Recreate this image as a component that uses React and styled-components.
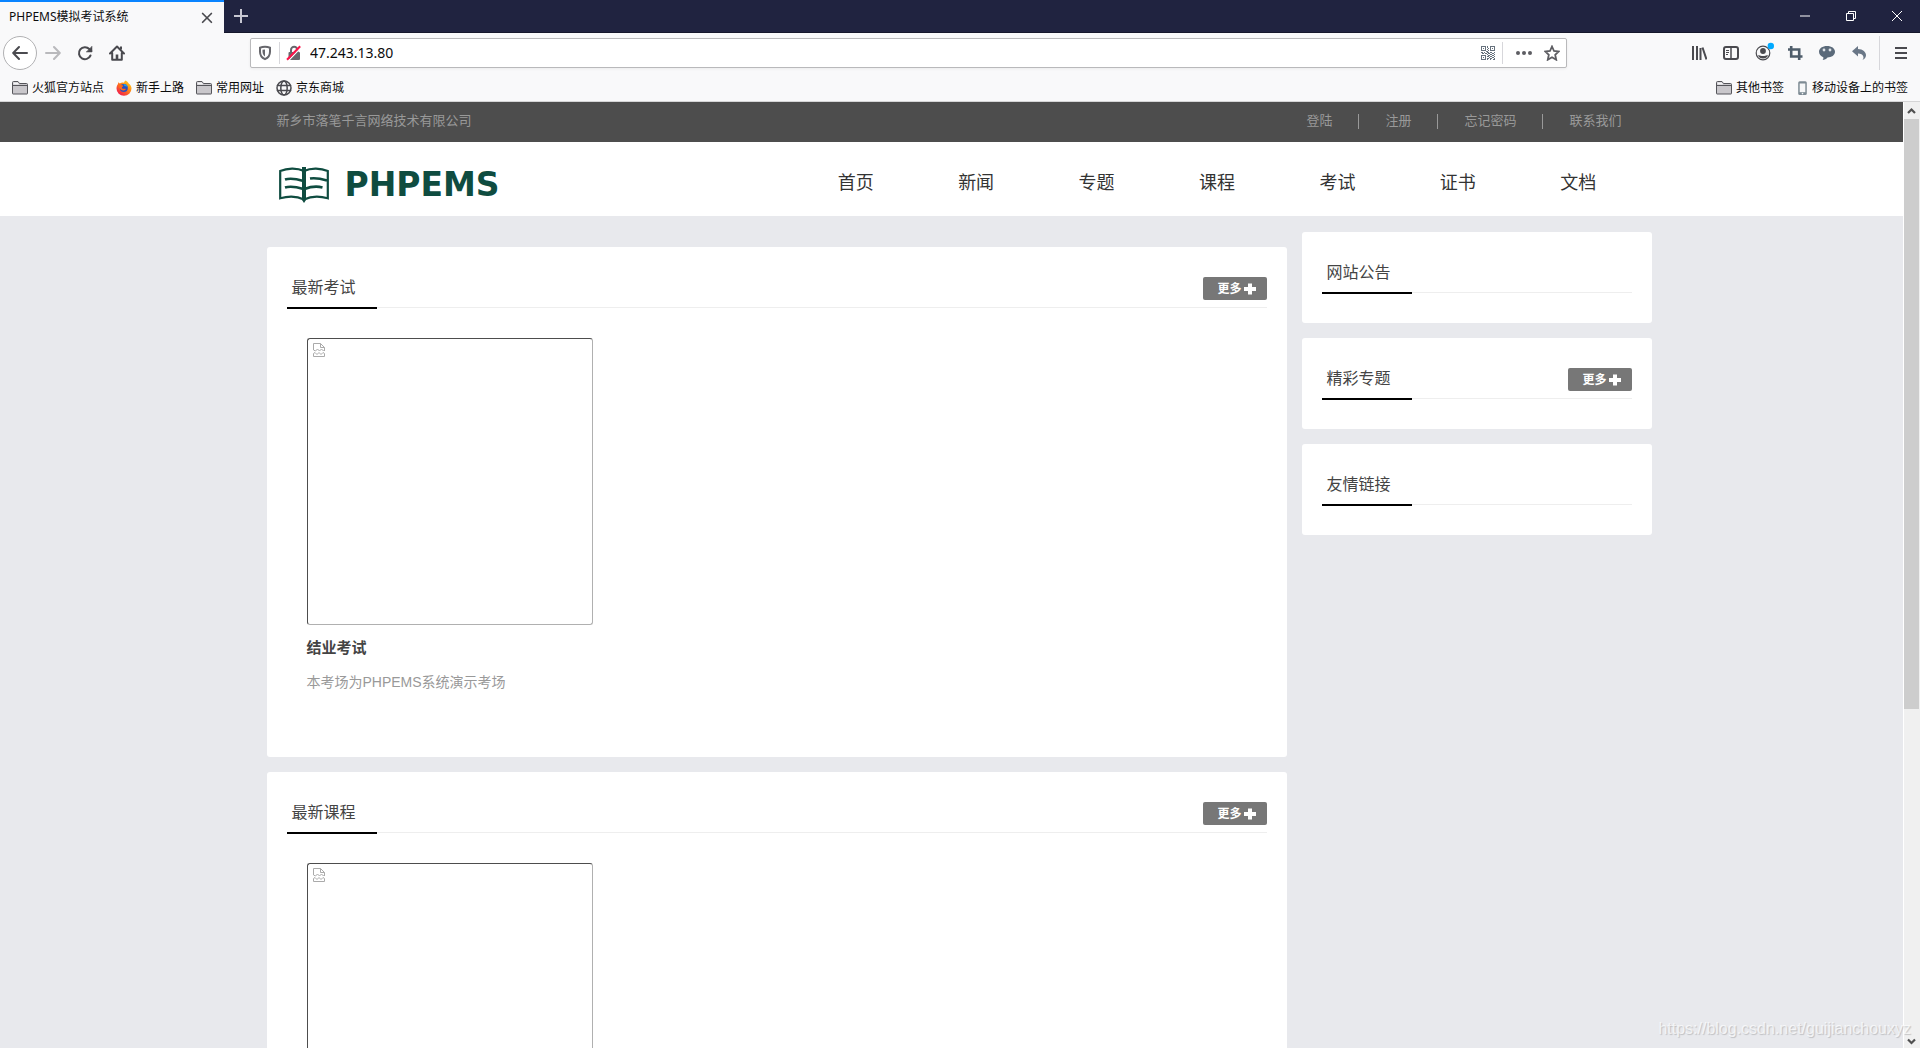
import styled, { createGlobalStyle } from "styled-components";

const GlobalStyle = createGlobalStyle`
  * {
    box-sizing: border-box;
  }
  body {
    margin: 0;
    font-family: "Liberation Sans", "Noto Sans CJK SC", sans-serif;
  }
  a {
    color: inherit;
    text-decoration: none;
  }
  button {
    border: 0;
    padding: 0;
    background: none;
    font-family: inherit;
  }
  svg {
    display: block;
    flex: none;
  }
`;

const Window = styled.div`
  position: relative;
  display: flex;
  flex-direction: column;
  height: 100vh;
  overflow: hidden;
`;

/* browser frame */

const Chrome = styled.header`
  flex: none;
  background: #f9f9fa;
  border-bottom: 1px solid #d5d5d6;
  color: #0c0c0d;
  font-family: "Noto Sans", "Noto Sans CJK SC", sans-serif;
  font-size: 12px;
`;

const TabStrip = styled.div`
  display: flex;
  height: 33px;
  background: #202340;
  border-bottom: 1px solid #15172b;
`;

const Tab = styled.div`
  display: flex;
  align-items: center;
  justify-content: space-between;
  width: 224px;
  height: 33px;
  padding: 0 10px 2px 9px;
  background: #f9f9fa;
  border-top: 2px solid #0a84ff;
`;

const TabTitle = styled.span`
  line-height: 16px;
`;

const IconButton = styled.button`
  display: flex;
  align-items: center;
  justify-content: center;
  width: ${(p) => p.$width || 32}px;
  height: ${(p) => p.$height || 32}px;
  color: ${(p) => p.$color || "#4a4a4f"};
`;

const WindowControls = styled.div`
  display: flex;
  margin-left: auto;
`;

const Toolbar = styled.div`
  display: flex;
  align-items: center;
  height: 40px;
  padding: 0 2px 0 3px;
`;

const BackButton = styled(IconButton)`
  width: 34px;
  height: 34px;
  background: #fff;
  border: 1px solid #b1b1b3;
  border-radius: 50%;
`;

const UrlBar = styled.label`
  flex: 1;
  display: flex;
  align-items: center;
  height: 30px;
  margin: 0 116px 0 117px;
  padding: 0 0 0 6px;
  background: #fff;
  border: 1px solid #b9b9bb;
  border-radius: 2px;
  box-shadow: 0 1px 3px rgba(0, 0, 0, 0.06);
`;

const Divider = styled.span`
  flex: none;
  width: 1px;
  height: ${(p) => p.$height || 22}px;
  margin: 0 ${(p) => p.$gap || 7}px;
  background: #d7d7db;
`;

const UrlInput = styled.input`
  flex: 1;
  min-width: 0;
  border: 0;
  padding: 0;
  margin-left: 8px;
  background: none;
  color: #0c0c0d;
  font-family: "Noto Sans", sans-serif;
  font-size: 14px;
  line-height: 20px;
  outline: none;
`;

const UrlActions = styled.div`
  display: flex;
  align-items: center;
`;

const ToolbarActions = styled.div`
  display: flex;
  align-items: center;
`;

const Bookmarks = styled.nav`
  display: flex;
  justify-content: space-between;
  height: 28px;
  padding: 1px 12px 0;
`;

const BookmarkGroup = styled.div`
  display: flex;
  gap: 12px;
`;

const Bookmark = styled.a`
  display: flex;
  align-items: center;
  gap: 4px;
  line-height: 16px;
`;

/* web page */

const Viewport = styled.div`
  flex: 1;
  display: flex;
  min-height: 0;
`;

const Page = styled.div`
  flex: 1;
  min-width: 0;
  overflow: hidden;
  background: #e8e9ed;
`;

const Container = styled.div`
  display: flex;
  max-width: 1400px;
  margin: 0 auto;
`;

const TopBar = styled.div`
  background: #4d4d4d;
  color: #999;
  font-size: 13px;
  line-height: 20px;
`;

const TopBarRow = styled(Container)`
  align-items: center;
  justify-content: space-between;
  height: 40px;
  padding: 0 30px 2px 25px;
`;

const TopLinks = styled.div`
  display: flex;
  align-items: center;
  gap: 26px;
`;

const LinkSeparator = styled.span`
  width: 1px;
  height: 15px;
  background: #999;
`;

const SiteHeader = styled.div`
  background: #fff;
`;

const HeaderRow = styled(Container)`
  align-items: center;
  justify-content: space-between;
  height: 74px;
  padding: 8px 13px 0 27px;
`;

const Logo = styled.a`
  display: flex;
  align-items: center;
  gap: 16px;
  padding-top: 4px;
  color: #0f4c40;
  font-family: "DejaVu Sans", sans-serif;
  font-size: 33px;
  font-weight: bold;
  line-height: 36px;
`;

const MainNav = styled.nav`
  display: flex;
  width: 843px;
`;

const NavLink = styled.a`
  flex: 1;
  color: #333;
  font-size: 18px;
  line-height: 28px;
  text-align: center;
`;

const Columns = styled(Container)`
  align-items: flex-start;
  gap: 15px;
  padding: 16px 0 0 15px;
`;

const MainColumn = styled.main`
  flex: 1;
  display: flex;
  flex-direction: column;
  gap: 15px;
  padding-top: 15px;
`;

const SideColumn = styled.aside`
  flex: none;
  display: flex;
  flex-direction: column;
  gap: 15px;
  width: 350px;
`;

const Panel = styled.section`
  padding: 20px 20px 30px;
  background: #fff;
  border-radius: 3px;
`;

const PanelHead = styled.div`
  display: flex;
  align-items: flex-end;
  justify-content: space-between;
  height: 41px;
  border-bottom: 1px solid #eee;
`;

const PanelTitle = styled.h2`
  min-width: 90px;
  margin: 0 0 -2px;
  padding: 0 5px 7px;
  border-bottom: 2px solid #000;
  color: #444;
  font-size: 16px;
  font-weight: normal;
  line-height: 24px;
`;

const MoreLink = styled.a`
  display: flex;
  align-items: center;
  gap: 2px;
  height: 23px;
  margin-bottom: 7px;
  padding: 0 11px 0 14px;
  background: #777;
  border-radius: 2px;
  color: #fff;
  font-size: 12px;
  font-weight: bold;
  line-height: 20px;
`;

const Card = styled.article`
  width: 286px;
  margin: 30px 0 35px 20px;
`;

const Thumb = styled.div`
  height: 287px;
  padding: 4px 5px;
  border: 1px solid;
  border-color: #4d4d4d #b0b0b0 #b0b0b0 #4d4d4d;
  border-radius: 3px;
`;

const CardName = styled.h3`
  margin: 11px 0 12px;
  color: #444;
  font-size: 15px;
  line-height: 24px;
`;

const CardText = styled.p`
  margin: 0;
  color: #999;
  font-size: 14px;
  line-height: 20px;
`;

const ScrollBar = styled.div`
  flex: none;
  display: flex;
  flex-direction: column;
  width: 17px;
  background: #f0f0f0;
  border-left: 1px solid #fff;
`;

const ScrollTrack = styled.div`
  flex: 1;
  display: grid;
  grid-template-rows: 11fr 6fr;
  padding-right: 1px;
`;

const ScrollThumb = styled.div`
  background: #cdcdcd;
`;

const Watermark = styled.span`
  position: absolute;
  right: 9px;
  bottom: 9px;
  color: rgba(255, 255, 255, 0.7);
  font-size: 16px;
  line-height: 20px;
  text-shadow: 1px 1px 1px rgba(0, 0, 0, 0.18);
`;

/* icons */

const Stroke = ({ size = 16, width = 2, children, ...rest }) => (
  <svg
    width={size}
    height={size}
    viewBox="0 0 16 16"
    fill="none"
    stroke="currentColor"
    strokeWidth={width}
    strokeLinecap="round"
    strokeLinejoin="round"
    {...rest}
  >
    {children}
  </svg>
);

const FolderIcon = () => (
  <svg width="16" height="16" viewBox="0 0 16 16">
    <path
      d="M.5 13.5V2.500q0-1 1-1H6l1.500 2h7q1 0 1 1v9q0 .5-.5.500H1q-.5 0-.5-.5z"
      fill="#c9c7cb"
      stroke="#55555a"
    />
    <path d="M1 5.500h14" stroke="#55555a" />
    <path d="M1.500 2.500h4.300l1.300 2H1.500z" fill="#f4f4f5" />
  </svg>
);

const FirefoxIcon = () => (
  <svg width="16" height="16" viewBox="0 0 16 16">
    <defs>
      <linearGradient id="flame" x1="1" y1="0" x2="0.200" y2="1">
        <stop offset="0" stopColor="#ffe226" />
        <stop offset="0.450" stopColor="#ff8a16" />
        <stop offset="1" stopColor="#f0134f" />
      </linearGradient>
    </defs>
    <path
      d="M9.500.5c2 1 2.700 2 3.200 3 1.800 1.200 2.800 3 2.800 5A7.500 7.300 0 0 1 .5 8.500c0-2 .5-3.500 1.500-4.600l.3-1.700 1.500 1.200C5.500 2.300 7 2.500 8 2.800 8.200 2 8.700 1 9.500.5z"
      fill="url(#flame)"
    />
    <circle cx="7.800" cy="8" r="4" fill="#2a4fc0" />
    <path d="M7.500 4.200c2.500-.4 4 1 4.200 3.200-1-1.200-2-1.300-3-1.200z" fill="#1aa7ec" />
    <path d="M2.500 4c1.500-.2 2.500.3 3.300 1.200 1 .1 1.700.3 1.500.8L6 7.200c-.3 1 .6 1.600 1.600 1.600 1 0 1.500-.4 2.300.1-.8 1.600-3 2-5 .8C3 8.500 2.300 6 2.500 4z" fill="#ff6a1a" />
  </svg>
);

const GlobeIcon = () => (
  <Stroke width="1.5" stroke="#4a4a4f">
    <circle cx="8" cy="8" r="7" />
    <ellipse cx="8" cy="8" rx="3.200" ry="7" />
    <path d="M1.500 5.500h13M1.500 10.500h13" />
  </Stroke>
);

const PhoneIcon = () => (
  <svg width="12" height="16" viewBox="0 0 12 16">
    <rect x="2.200" y="1.200" width="8.600" height="13.800" rx="1.500" fill="#7e8b94" />
    <rect x="3.700" y="3.500" width="5.600" height="8.700" fill="#f6f7f8" />
    <circle cx="6.500" cy="13.600" r=".8" fill="#f6f7f8" />
  </svg>
);

const ShieldIcon = () => (
  <svg width="16" height="16" viewBox="0 0 16 16">
    <path
      d="M8 1.800c1.700 0 3.500.3 5 .9v4.100c0 3.500-1.800 6-5 7.400-3.200-1.400-5-3.900-5-7.400V2.700c1.500-.6 3.300-.9 5-.9z"
      fill="none"
      stroke="#67676c"
      strokeWidth="2"
    />
    <path d="M8 4.500v7C6.200 10.300 5.500 8.500 5.500 6.500V4.800z" fill="#67676c" />
  </svg>
);

const InsecureIcon = () => (
  <svg width="16" height="16" viewBox="0 0 16 16">
    <path d="M5 8V5a3.200 3.200 0 0 1 6.400 0v3" fill="none" stroke="#67676c" strokeWidth="2" />
    <rect x="2.500" y="7" width="11.500" height="8" rx="1" fill="#67676c" />
    <path d="M2.600 15.500 15 2.600" stroke="#fff" strokeWidth="1.200" />
    <path d="M1 14.800 14.200 1.200" stroke="#ff1249" strokeWidth="2" />
  </svg>
);

const qrRows = [
  "11111010011111",
  "10001010010001",
  "10101001010101",
  "10001010010001",
  "11111001011111",
  "00000110000000",
  "11010011011001",
  "01101101100110",
  "00000010011001",
  "11111001100110",
  "10001011011001",
  "10101000100110",
  "10001011011001",
  "11111010010011",
];

const QrIcon = () => (
  <svg width="14" height="14" viewBox="0 0 14 14" shapeRendering="crispEdges" fill="#66717d">
    {qrRows.map((row, y) =>
      [...row].map((bit, x) =>
        bit === "1" ? <rect key={`${x}-${y}`} x={x} y={y} width="1" height="1" /> : null
      )
    )}
  </svg>
);

const DotsIcon = () => (
  <svg width="16" height="16" viewBox="0 0 16 16" fill="#5d5d62">
    <circle cx="2" cy="8" r="2" />
    <circle cx="8" cy="8" r="2" />
    <circle cx="14" cy="8" r="2" />
  </svg>
);

const LibraryIcon = () => (
  <svg width="16" height="16" viewBox="0 0 16 16" fill="none" stroke="#4a4a4f" strokeWidth="2">
    <path d="M2 1v14M6 1v14M9.500 3v12M11.500 2.500l4 12" />
  </svg>
);

const SidebarIcon = () => (
  <svg width="16" height="16" viewBox="0 0 16 16" fill="none" stroke="#4a4a4f">
    <rect x="1" y="2" width="14" height="12" rx="2" strokeWidth="2" />
    <path d="M8 2v12" strokeWidth="1.500" />
    <path d="M3 5.500h3M3 7.500h3M3 9.500h2" />
  </svg>
);

const AccountIcon = () => (
  <svg width="22" height="22" viewBox="0 0 22 22">
    <circle cx="11" cy="11" r="6.800" fill="none" stroke="#4a4a4f" strokeWidth="1.200" />
    <circle cx="11" cy="9" r="2.900" fill="#4a4a4f" />
    <path d="M6 13.500c1.500-1 2.500.5 5 .5s3.500-1.500 5-.5c-.8 2-2.500 3-5 3s-4.200-1-5-3z" fill="#4a4a4f" />
    <circle cx="18.800" cy="4" r="3.200" fill="#00a9ff" />
  </svg>
);

const CropIcon = () => (
  <svg width="16" height="16" viewBox="0 0 16 16" fill="none" stroke="#4f5d6b" strokeWidth="2.600">
    <path d="M1 4.500h11.200V15M4.200 1v10.500H15.500" />
  </svg>
);

const ChatIcon = () => (
  <svg width="18" height="16" viewBox="0 0 18 16">
    <path
      d="M9 1c4.500 0 8 2.300 8 5.800S13.500 12.500 9.500 12.500C8.500 14 6.500 15 4.500 15c.8-.8 1-1.800.8-2.800C2.700 11.300 1 9.300 1 6.800 1 3.300 4.500 1 9 1z"
      fill="#5b6a7a"
    />
    <circle cx="6" cy="5" r="1.400" fill="#dfe3e8" />
    <circle cx="12" cy="5" r="1.400" fill="#dfe3e8" />
  </svg>
);

const UndoIcon = () => (
  <svg width="16" height="16" viewBox="0 0 16 16">
    <path d="M1 6.200 7 1v3c5 .2 8 3 8 6.300 0 2.300-1.500 4-3.800 4.700 1.300-1.200 1.500-2.500 1-3.800C11.500 9.500 10 8.600 7 8.500v3z" fill="#6a7787" />
  </svg>
);

const BookIcon = () => (
  <svg width="50" height="36" viewBox="0 0 50 36" fill="none" stroke="#0f4c40">
    <path d="M23 0h4v33l-2 3-2-3z" fill="#0f4c40" stroke="none" />
    <path
      d="M25 4C18 .500 8 1 1.200 4v27.200C9 29 18 29 25 32.500 32 29 41 29 48.800 31.200V4C42 1 32 .500 25 4z"
      strokeWidth="2.200"
    />
    <path
      d="M6 12.500c6-2 12-.5 18.500 1.500M6 20.500c6-2 12-.5 18.500 1.500M31 11.500c6-1 11 .2 17 2M25.500 22C32 19.500 38 19 43.500 20.500"
      strokeWidth="2.600"
    />
  </svg>
);

const BrokenImageIcon = () => (
  <svg width="12" height="14" viewBox="0 0 12 14" fill="none" stroke="#aaa">
    <path d="M.5 7V.5h7l4 4V8M7.500.5v4h4M.5 7l2 1 2-2 2 2 2-2 2 2 1-1" />
    <path d="M.5 10.500v3h11v-3l-1.500-1-2 2-2-2-2 2-2-2z" />
  </svg>
);

const PlusIcon = () => (
  <svg width="12" height="12" viewBox="0 0 12 12" fill="none" stroke="#fff" strokeWidth="4">
    <path d="M6 .5v11M0 6h12" />
  </svg>
);

const ScrollArrow = ({ down }) => (
  <svg width="16" height="17" viewBox="0 0 16 17" fill="none" stroke="#505050" strokeWidth="2.200">
    <path d={down ? "M4 8.500l3.500 3.500L11 8.500" : "M4 11l3.500-3.500L11 11"} />
  </svg>
);

const topLinks = ["登陆", "注册", "忘记密码", "联系我们"];
const navItems = ["首页", "新闻", "专题", "课程", "考试", "证书", "文档"];

const sidePanels = [
  { title: "网站公告" },
  { title: "精彩专题", more: true },
  { title: "友情链接" },
];

const BrowserChrome = () => (
  <Chrome>
    <TabStrip>
      <Tab>
        <TabTitle>PHPEMS模拟考试系统</TabTitle>
        <IconButton $width={14} $height={16} aria-label="关闭标签页">
          <Stroke size={14} width="2">
            <path d="M3 4l10 10M13 4 3 14" />
          </Stroke>
        </IconButton>
      </Tab>
      <IconButton $width={34} $color="#c7c7d2" aria-label="新建标签页">
        <Stroke width="2" strokeLinecap="butt">
          <path d="M8 1v14M1 8h14" />
        </Stroke>
      </IconButton>
      <WindowControls>
        <IconButton $width={46} $color="#fff" aria-label="最小化">
          <Stroke size={10} width="1.600" strokeLinecap="butt">
            <path d="M0 8h16" />
          </Stroke>
        </IconButton>
        <IconButton $width={46} $color="#fff" aria-label="还原">
          <svg width="10" height="10" viewBox="0 0 10 10" fill="none" stroke="currentColor">
            <path d="M.5 2.500h7v7h-7zM2.500 2.500v-2h7v7h-2" />
          </svg>
        </IconButton>
        <IconButton $width={46} $color="#fff" aria-label="关闭">
          <svg width="10" height="10" viewBox="0 0 10 10" stroke="currentColor">
            <path d="M0 0l10 10M10 0 0 10" />
          </svg>
        </IconButton>
      </WindowControls>
    </TabStrip>

    <Toolbar>
      <BackButton aria-label="后退">
        <Stroke>
          <path d="M15 8H1.500M7 2 1.200 8 7 14" />
        </Stroke>
      </BackButton>
      <IconButton $color="#b9b9bc" aria-label="前进">
        <Stroke>
          <path d="M1 8h13.500M9 2l5.800 6L9 14" />
        </Stroke>
      </IconButton>
      <IconButton aria-label="刷新">
        <Stroke>
          <path d="M13.500 10.500A6 6 0 1 1 12.300 4l2 2" />
          <path d="M15 1.500V7H9.500z" fill="currentColor" strokeWidth="0.500" />
        </Stroke>
      </IconButton>
      <IconButton aria-label="主页">
        <Stroke>
          <path d="M1 8.500 8 1.500l7 7M3.200 8v6.800h9.600V8" />
          <path d="M8 14.500V9.500" strokeWidth="2.600" strokeLinecap="butt" />
          <path d="M12 1.500v3" strokeLinecap="butt" />
        </Stroke>
      </IconButton>

      <UrlBar>
        <ShieldIcon />
        <Divider $gap={6} />
        <InsecureIcon />
        <UrlInput type="text" defaultValue="47.243.13.80" aria-label="地址" />
        <UrlActions>
          <IconButton $width={14} $height={28} aria-label="二维码">
            <QrIcon />
          </IconButton>
          <Divider />
          <IconButton $width={28} $height={28} aria-label="页面操作">
            <DotsIcon />
          </IconButton>
          <IconButton $width={28} $height={28} $color="#5d5d62" aria-label="收藏">
            <Stroke width="1.800" strokeLinejoin="miter">
              <path d="M8 1.500l2 4.500 4.800.5-3.600 3.300 1 4.900L8 12.200l-4.200 2.500 1-4.900L1.200 6.500 6 6z" />
            </Stroke>
          </IconButton>
        </UrlActions>
      </UrlBar>

      <ToolbarActions>
        <IconButton aria-label="我的足迹"><LibraryIcon /></IconButton>
        <IconButton aria-label="侧栏"><SidebarIcon /></IconButton>
        <IconButton aria-label="账户"><AccountIcon /></IconButton>
        <IconButton aria-label="截图"><CropIcon /></IconButton>
        <IconButton aria-label="微信"><ChatIcon /></IconButton>
        <IconButton aria-label="撤销"><UndoIcon /></IconButton>
        <Divider $height={34} $gap={4} />
        <IconButton $width={34} aria-label="菜单">
          <svg width="12" height="12" viewBox="0 0 12 12" stroke="currentColor" strokeWidth="2">
            <path d="M0 1h12M0 6h12M0 11h12" />
          </svg>
        </IconButton>
      </ToolbarActions>
    </Toolbar>

    <Bookmarks>
      <BookmarkGroup>
        <Bookmark href="#"><FolderIcon />火狐官方站点</Bookmark>
        <Bookmark href="#"><FirefoxIcon />新手上路</Bookmark>
        <Bookmark href="#"><FolderIcon />常用网址</Bookmark>
        <Bookmark href="#"><GlobeIcon />京东商城</Bookmark>
      </BookmarkGroup>
      <BookmarkGroup>
        <Bookmark href="#"><FolderIcon />其他书签</Bookmark>
        <Bookmark href="#"><PhoneIcon />移动设备上的书签</Bookmark>
      </BookmarkGroup>
    </Bookmarks>
  </Chrome>
);

const PanelHeader = ({ title, more }) => (
  <PanelHead>
    <PanelTitle>{title}</PanelTitle>
    {more && (
      <MoreLink href="#">
        更多
        <PlusIcon />
      </MoreLink>
    )}
  </PanelHead>
);

const App = () => {
  return (
    <Window>
      <GlobalStyle />
      <BrowserChrome />
      <Viewport>
        <Page>
          <TopBar>
            <TopBarRow>
              <span>新乡市落笔千言网络技术有限公司</span>
              <TopLinks>
                {topLinks.map((text, i) => [
                  i > 0 && <LinkSeparator key={`${text}-sep`} />,
                  <a href="#" key={text}>{text}</a>,
                ])}
              </TopLinks>
            </TopBarRow>
          </TopBar>
          <SiteHeader>
            <HeaderRow>
              <Logo href="#">
                <BookIcon />
                PHPEMS
              </Logo>
              <MainNav>
                {navItems.map((item) => (
                  <NavLink href="#" key={item}>{item}</NavLink>
                ))}
              </MainNav>
            </HeaderRow>
          </SiteHeader>
          <Columns>
            <MainColumn>
              <Panel>
                <PanelHeader title="最新考试" more />
                <Card>
                  <Thumb><BrokenImageIcon /></Thumb>
                  <CardName>结业考试</CardName>
                  <CardText>本考场为PHPEMS系统演示考场</CardText>
                </Card>
              </Panel>
              <Panel>
                <PanelHeader title="最新课程" more />
                <Card>
                  <Thumb><BrokenImageIcon /></Thumb>
                </Card>
              </Panel>
            </MainColumn>
            <SideColumn>
              {sidePanels.map((panel) => (
                <Panel key={panel.title}>
                  <PanelHeader title={panel.title} more={panel.more} />
                </Panel>
              ))}
            </SideColumn>
          </Columns>
        </Page>
        <ScrollBar>
          <ScrollArrow />
          <ScrollTrack>
            <ScrollThumb />
          </ScrollTrack>
          <ScrollArrow down />
        </ScrollBar>
      </Viewport>
      <Watermark>https://blog.csdn.net/guijianchouxyz</Watermark>
    </Window>
  );
};

export default App;
